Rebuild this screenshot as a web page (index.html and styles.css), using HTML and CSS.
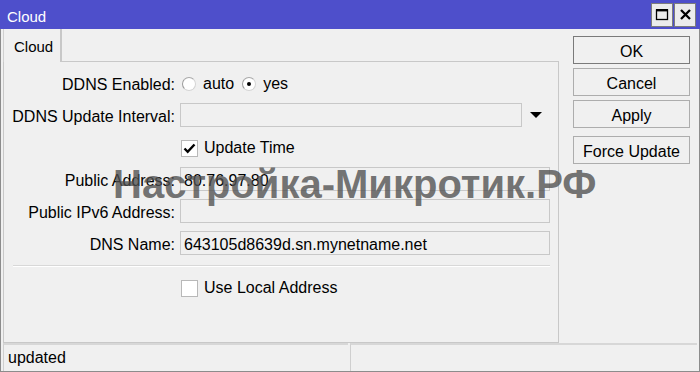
FILE: index.html
```html
<!DOCTYPE html>
<html lang="ru">
    <head>
        <meta charset="UTF-8">
        <meta name="viewport" content="width=device-width, initial-scale=1.0">
        <title>Cloud</title>
        <link rel="stylesheet" href="styles.css">
    </head>
    <body>
        <div class="window">
            <div class="titlebar">
                <span class="title">Cloud</span>
                <div class="win-buttons">
                    <span class="win-btn">
                        <svg width="14" height="13" viewBox="0 0 14 13">
                            <rect x="1.5" y="2" width="11" height="9.5" fill="none" stroke="#000" stroke-width="1.3"/>
                            <rect x="1" y="1" width="12" height="2.4" fill="#000"/>
                        </svg>
                    </span>
                    <span class="win-btn">
                        <svg width="13" height="13" viewBox="0 0 13 13">
                            <path d="M2 2l9 9M11 2l-9 9" stroke="#000" stroke-width="2.3" fill="none"/>
                        </svg>
                    </span>
                </div>
            </div>

            <div class="frame">
                <div class="main">
                    <div class="tabs">
                        <div class="tabstrip">
                            <div class="tab">Cloud</div>
                            <div class="tab-fill"></div>
                        </div>
                        <div class="panel">
                            <div class="form">
                                <span class="label">DDNS Enabled:</span>
                                <div class="radios">
                                    <span class="radio"></span><span class="radio-text">auto</span>
                                    <span class="radio checked"></span><span class="radio-text">yes</span>
                                </div>

                                <span class="label">DDNS Update Interval:</span>
                                <div class="select-row">
                                    <div class="field short"></div>
                                    <span class="arrow"></span>
                                </div>

                                <span></span>
                                <div class="check">
                                    <span class="box">
                                        <svg width="15" height="15" viewBox="0 0 15 15">
                                            <path d="M2.5 7.5l3.2 3.3L12.5 3.5" stroke="#000" stroke-width="2.4" fill="none"/>
                                        </svg>
                                    </span>
                                    <span class="check-text">Update Time</span>
                                </div>

                                <span class="label">Public Address:</span>
                                <div class="field">80.76.97.80</div>

                                <span class="label">Public IPv6 Address:</span>
                                <div class="field"></div>

                                <span class="label">DNS Name:</span>
                                <div class="field">643105d8639d.sn.mynetname.net</div>

                                <div class="separator"></div>

                                <span></span>
                                <div class="check">
                                    <span class="box"></span>
                                    <span class="check-text">Use Local Address</span>
                                </div>
                            </div>
                        </div>
                    </div>

                    <div class="actions">
                        <button class="btn default">OK</button>
                        <button class="btn">Cancel</button>
                        <button class="btn">Apply</button>
                        <button class="btn spaced">Force Update</button>
                    </div>
                </div>

                <div class="statusbar">
                    <div class="pane first">updated</div>
                    <div class="pane"></div>
                </div>
            </div>

            <div class="watermark">Настройка-Микротик.РФ</div>
        </div>
    </body>
</html>
```

FILE: styles.css
```css
body {
    margin: 0;
    background-color: #f0f0f0;
    color: #000;
    font-family: "Liberation Sans", Arial, sans-serif;
    font-size: 16px;
}

.window {
    position: relative;
    width: 700px;
    height: 372px;
}

.titlebar {
    height: 29px;
    box-sizing: border-box;
    background-color: #4e4fcb;
    color: #fff;
    font-size: 15px;
    display: flex;
    align-items: center;
    padding-left: 7px;
}

.title {
    flex: 1;
    padding-top: 3px;
}

.win-buttons {
    display: flex;
    gap: 1px;
    margin-right: 4px;
}

.win-btn {
    width: 20px;
    height: 22px;
    border: 1px solid #7c7c7c;
    background-color: #ececec;
    display: flex;
    align-items: center;
    justify-content: center;
}

.frame {
    height: 343px;
    box-sizing: border-box;
    border: 1px solid #8c8c8c;
    border-top: none;
    padding: 0 2px;
    display: flex;
    flex-direction: column;
}

.main {
    display: flex;
    height: 314px;
}

.tabs {
    width: 556px;
    display: flex;
    flex-direction: column;
}

.tabstrip {
    display: flex;
    height: 33px;
}

.tab {
    width: 46px;
    padding-left: 10px;
    padding-top: 1px;
    line-height: 33px;
    font-size: 15px;
    border-left: 1px solid #d0d0d0;
    border-right: 2px solid #c8c8c8;
}

.tab-fill {
    flex: 1;
    border-bottom: 1px solid #c8c8c8;
}

.panel {
    flex: 1;
    border: 1px solid #c8c8c8;
    border-top: none;
    padding: 9px 8px 0 0;
}

.form {
    display: grid;
    grid-template-columns: 171px 1fr;
    column-gap: 5px;
    row-gap: 8px;
}

.label {
    height: 24px;
    box-sizing: border-box;
    padding-top: 3px;
    text-align: right;
    line-height: 21px;
    white-space: nowrap;
}

.field {
    height: 24px;
    box-sizing: border-box;
    border: 1px solid #c8c8c8;
    padding: 2px 0 0 3px;
    line-height: 21px;
}

.select-row {
    display: flex;
    align-items: center;
}

.field.short {
    width: 342px;
}

.arrow {
    margin-left: 8px;
    border-left: 6px solid transparent;
    border-right: 6px solid transparent;
    border-top: 6px solid #000;
}

.radios {
    display: flex;
    align-items: center;
    height: 24px;
    padding-top: 2px;
    box-sizing: border-box;
}

.radio {
    width: 14px;
    height: 14px;
    box-sizing: border-box;
    border-radius: 50%;
    background-color: #fff;
    border: 1px solid #d4d4d4;
    border-left-color: #9a9a9a;
    border-top-color: #a8a8a8;
    margin-left: 2px;
    position: relative;
}

.radio + .radio-text + .radio {
    margin-left: 8px;
}

.radio.checked::after {
    content: "";
    position: absolute;
    left: 4px;
    top: 4px;
    width: 4px;
    height: 4px;
    border-radius: 50%;
    background-color: #000;
}

.radio-text {
    margin-left: 7px;
}

.check {
    display: flex;
    align-items: center;
    height: 24px;
    padding-top: 2px;
    box-sizing: border-box;
}

.box {
    width: 17px;
    height: 17px;
    box-sizing: border-box;
    margin-left: 1px;
    background-color: #fff;
    border: 1px solid #b8b8b8;
    display: flex;
    align-items: center;
    justify-content: center;
}

.check-text {
    margin-left: 6px;
}

.separator {
    grid-column: 1 / -1;
    margin: 2px 0 0 9px;
    border-top: 1px solid #d8d8d8;
    border-bottom: 1px solid #fff;
}

.actions {
    width: 117px;
    margin-left: 14px;
    padding-top: 7px;
    display: flex;
    flex-direction: column;
    gap: 4px;
}

.btn {
    height: 28px;
    box-sizing: border-box;
    border: 1px solid #adadad;
    background-color: #f0f0f0;
    font-family: inherit;
    font-size: 16px;
    color: #000;
    padding: 3px 0 0;
}

.btn.default {
    border-color: #7a7a7a;
}

.btn.spaced {
    margin-top: 4px;
}

.statusbar {
    display: flex;
    height: 28px;
}

.pane {
    flex: 1;
    border-top: 2px solid #d7d7d7;
    border-left: 1px solid #cfcfcf;
    padding-left: 4px;
    line-height: 26px;
}

.pane.first {
    flex: none;
    width: 345px;
    box-sizing: border-box;
    margin-right: 2px;
}

.watermark {
    position: absolute;
    left: 113px;
    top: 164px;
    font-size: 40px;
    line-height: 40px;
    font-weight: bold;
    color: rgba(80, 80, 80, 0.8);
    white-space: nowrap;
    pointer-events: none;
}
```
